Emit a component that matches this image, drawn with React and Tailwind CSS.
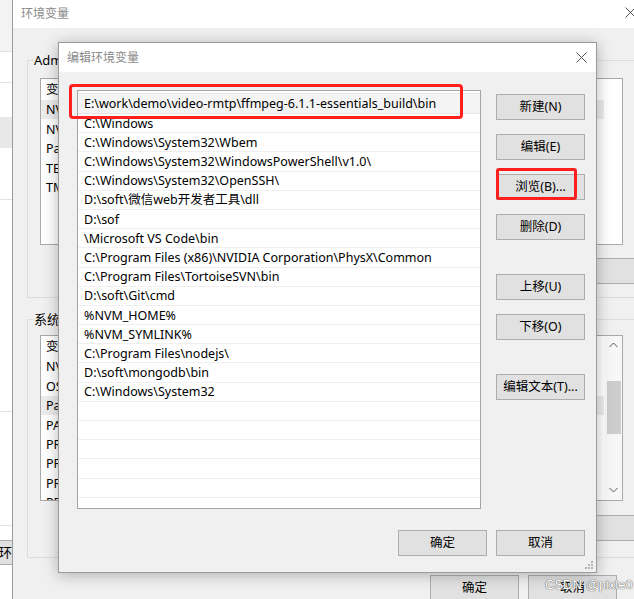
import React from 'react'

const font = { fontFamily: '"Noto Sans", "Noto Sans CJK SC", sans-serif' }

const paths = [
  'C:\\Windows',
  'C:\\Windows\\System32\\Wbem',
  'C:\\Windows\\System32\\WindowsPowerShell\\v1.0\\',
  'C:\\Windows\\System32\\OpenSSH\\',
  'D:\\soft\\微信web开发者工具\\dll',
  'D:\\sof',
  '\\Microsoft VS Code\\bin',
  'C:\\Program Files (x86)\\NVIDIA Corporation\\PhysX\\Common',
  'C:\\Program Files\\TortoiseSVN\\bin',
  'D:\\soft\\Git\\cmd',
  '%NVM_HOME%',
  '%NVM_SYMLINK%',
  'C:\\Program Files\\nodejs\\',
  'D:\\soft\\mongodb\\bin',
  'C:\\Windows\\System32',
  '', '', '', '', '', '',
]

const userVars = ['NVM_HOME', 'NVM_SYMLINK', 'Path', 'TEMP', 'TMP']
const sysVars = ['NVM_HOME', 'OS', 'Path', 'PATHEXT', 'PROCESSOR_ARCHITECTURE', 'PROCESSOR_IDENTIFIER', 'PROCESSOR_LEVEL', 'PROCESSOR_REVISION']

function CloseX({ color = '#444' }) {
  return (
    <svg width="11" height="11" viewBox="0 0 11 11">
      <path d="M0.5 0.5 L10.5 10.5 M10.5 0.5 L0.5 10.5" stroke={color} strokeWidth="1" fill="none" />
    </svg>
  )
}

function Btn({ children, className = '' }) {
  return (
    <div className={`flex h-[26px] w-[89px] items-center justify-center border border-[#adadad] bg-[#e1e1e1] pt-[1px] text-[12.5px] text-black ${className}`}>
      {children}
    </div>
  )
}

function VarList({ rows, selected, scroll }) {
  return (
    <div className="relative h-full overflow-hidden border border-[#a9a9a9] bg-white">
      <div className="flex h-[21px] items-center pl-[5px] pt-[2px] text-[12.5px]">变量</div>
      {rows.map((r, i) => (
        <div key={i} className={`flex h-[19.4px] w-[563px] items-center pl-[5px] pt-[2px] text-[12.5px] ${i === selected ? 'bg-[#ececec]' : ''}`}>{r}</div>
      ))}
      {scroll && (
        <div className="absolute right-0 top-0 flex h-full w-[17px] flex-col items-center bg-[#f7f7f7]">
          <svg className="mt-[6px]" width="9" height="6" viewBox="0 0 9 6"><path d="M0.5 5 L4.5 1 L8.5 5" stroke="#555" fill="none" /></svg>
          <div className="mt-[33px] h-[53px] w-[14px] bg-[#cdcdcd]" />
          <div className="flex-1" />
          <svg className="mb-[7px]" width="9" height="6" viewBox="0 0 9 6"><path d="M0.5 1 L4.5 5 L8.5 1" stroke="#555" fill="none" /></svg>
        </div>
      )}
    </div>
  )
}

// the row of buttons under each list; their labels sit behind the dialog
function BgButtons() {
  return (
    <div className="flex justify-end gap-[9px] pr-[12px]">
      <Btn className="w-[88px]" />
      <Btn className="w-[88px]" />
      <Btn className="w-[88px]" />
    </div>
  )
}

export default function App() {
  return (
    <div className="relative h-[599px] w-[634px] overflow-hidden bg-white text-black" style={font}>
      {/* window far behind, only a strip is visible */}
      <div className="absolute left-0 top-0 flex h-[599px] w-[13px] flex-col border-r border-[#9c9c9c] bg-white">
        <div className="h-[52px] border-b border-[#e3e3e3] bg-[#f3f3f3]" />
        <div className="h-[31px] border-b border-[#e3e3e3]" />
        <div className="mt-[34px] h-[31px] bg-[#e8e8e8]" />
        <div className="h-[52px] border-b border-[#e3e3e3]" />
        <div className="h-[212px] border-b border-[#e3e3e3]" />
        <div className="h-[114px] border-b border-[#e3e3e3]" />
        <div className="mt-[14px] flex h-[25px] items-center justify-end overflow-hidden border-y border-[#adadad] bg-[#e1e1e1] text-[13px]">
          <span className="whitespace-nowrap">环</span>
        </div>
      </div>

      {/* 环境变量 window */}
      <div className="absolute left-[13px] top-0 flex h-[640px] w-[640px] flex-col bg-[#f0f0f0]">
        <div className="relative flex h-[28px] shrink-0 items-center bg-white pl-[8px]">
          <span className="text-[12px] text-[#8a8a8a]">环境变量</span>
          <div className="absolute left-[612px] top-[7px]"><CloseX color="#555" /></div>
        </div>

        <div className="relative ml-[14px] mt-[32px] h-[238px] border border-[#dcdcdc]">
          <span className="absolute -top-[10px] left-[5px] bg-[#f0f0f0] px-[1px] text-[13px]">Administrator 的用户变量</span>
          <div className="ml-[12px] mt-[17px] h-[167px] w-[583px]">
            <VarList rows={userVars} selected={0} />
          </div>
          <div className="mt-[13px]"><BgButtons /></div>
        </div>

        <div className="relative ml-[14px] mt-[21px] h-[239px] border border-[#dcdcdc]">
          <span className="absolute -top-[10px] left-[5px] bg-[#f0f0f0] px-[1px] text-[13px]">系统变量</span>
          <div className="ml-[12px] mt-[15px] h-[166px] w-[583px]">
            <VarList rows={sysVars} selected={2} scroll />
          </div>
          <div className="mt-[14px]"><BgButtons /></div>
        </div>

        <div className="mt-[17px] flex gap-[9px] pl-[417px]">
          <Btn className="w-[88px]">确定</Btn>
          <Btn className="w-[89px]">取消</Btn>
        </div>
      </div>

      {/* 编辑环境变量 dialog */}
      <div className="absolute left-[58px] top-[42px] flex h-[531px] w-[539px] flex-col border border-[#9b9b9b] bg-[#f0f0f0] shadow-[0_2px_14px_rgba(0,0,0,0.28)]">
        <div className="flex h-[29px] shrink-0 items-center justify-between bg-white pl-[8px] pr-[9px]">
          <span className="text-[12px] text-[#8a8a8a]">编辑环境变量</span>
          <CloseX color="#555" />
        </div>

        <div className="relative flex-1">
          <div className="flex gap-[15px] pl-[18px] pt-[18px]">
            <div className="h-[419px] w-[404px] overflow-hidden border border-[#a0a4ab] bg-white">
              <div className="mt-[2px] flex h-[21px] items-center border-y border-[#e6e6e6] bg-[#f4f4f4] pl-[6px] pt-[2px] text-[12.5px] whitespace-nowrap">
                E:\work\demo\video-rmtp\ffmpeg-6.1.1-essentials_build\bin
              </div>
              {paths.map((p, i) => (
                <div key={i} className="flex h-[19.2px] items-center border-b border-[#f0f0f0] pl-[6px] pt-[2px] text-[12.5px] whitespace-nowrap">{p}</div>
              ))}
            </div>

            <div className="flex flex-col pt-[4px]">
              <Btn>新建(N)</Btn>
              <Btn className="mt-[14px]">编辑(E)</Btn>
              <Btn className="mt-[14px]">浏览(B)...</Btn>
              <Btn className="mt-[14px]">删除(D)</Btn>
              <Btn className="mt-[34px]">上移(U)</Btn>
              <Btn className="mt-[14px]">下移(O)</Btn>
              <Btn className="mt-[34px]">编辑文本(T)...</Btn>
            </div>
          </div>

          <div className="mt-[21px] flex justify-end gap-[9px] pr-[11px]">
            <Btn>确定</Btn>
            <Btn>取消</Btn>
          </div>

          <svg className="absolute bottom-[3px] right-[3px]" width="9" height="9" viewBox="0 0 9 9" fill="#b5b5b5">
            <rect x="7" y="1" width="2" height="2" />
            <rect x="4" y="4" width="2" height="2" />
            <rect x="7" y="4" width="2" height="2" />
            <rect x="1" y="7" width="2" height="2" />
            <rect x="4" y="7" width="2" height="2" />
            <rect x="7" y="7" width="2" height="2" />
          </svg>

          {/* red highlight marks */}
          <div className="absolute left-[10px] top-[12px] h-[35px] w-[394px] rounded-[4px] border-[3px] border-[#ff1f1f]" />
          <div className="absolute left-[437px] top-[96px] h-[32px] w-[81px] rounded-[3px] border-[3px] border-[#ff1f1f]" />
        </div>
      </div>

      <span className="absolute left-[545px] top-[575px] text-[13px] text-white [text-shadow:0_0_1px_#555,0_0_1px_#555]" style={{ fontFamily: '"Liberation Sans", sans-serif' }}>
        CSDN @pixle0
      </span>
    </div>
  )
}
